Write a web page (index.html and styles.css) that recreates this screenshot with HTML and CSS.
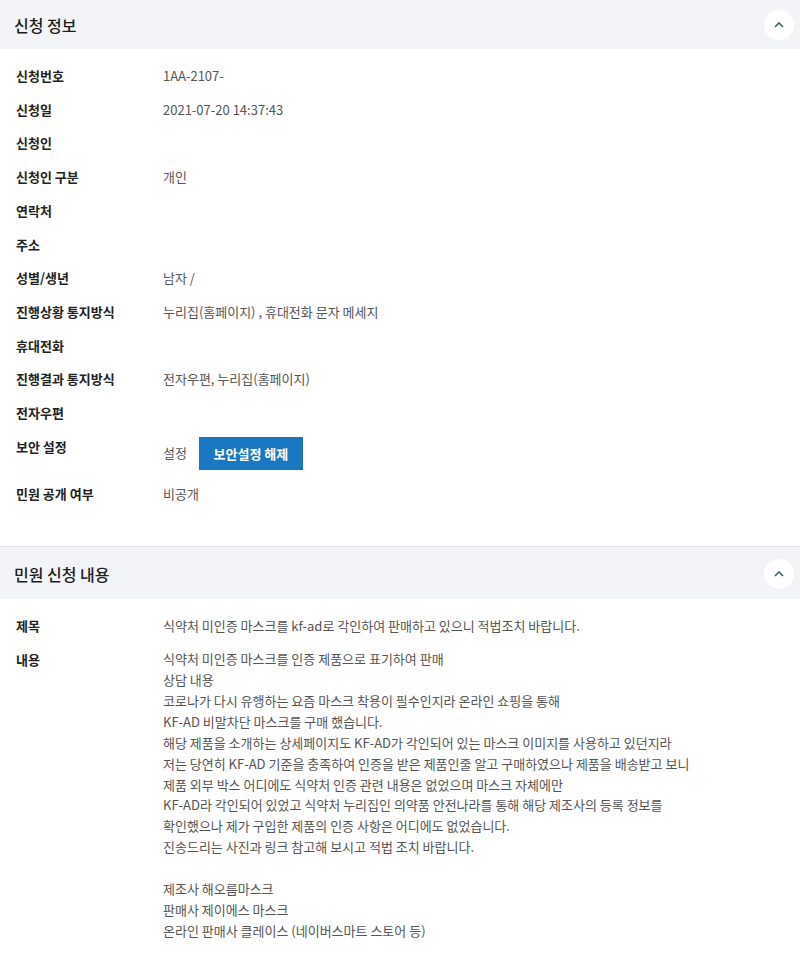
FILE: index.html
```html
<!DOCTYPE html>
<html>
	<head>
		<meta charset="utf-8">
		<title>민원 신청 정보</title>
		<link rel="stylesheet" href="styles.css">
	</head>
	<body>
		<div class="section first">
			<div class="sec-head">
				<h3>신청 정보</h3>
				<a class="fold" href="javascript:;">
					<svg width="14" height="14" viewBox="0 0 14 14"><path d="M3 9 L7 5 L11 9" fill="none" stroke="#3f6468" stroke-width="1.6"/></svg>
				</a>
			</div>
			<dl class="sec-body">
				<div class="row"><dt>신청번호</dt><dd>1AA-2107-</dd></div>
				<div class="row"><dt>신청일</dt><dd>2021-07-20 14:37:43</dd></div>
				<div class="row"><dt>신청인</dt><dd></dd></div>
				<div class="row"><dt>신청인 구분</dt><dd>개인</dd></div>
				<div class="row"><dt>연락처</dt><dd></dd></div>
				<div class="row"><dt>주소</dt><dd></dd></div>
				<div class="row"><dt>성별/생년</dt><dd>남자 /</dd></div>
				<div class="row"><dt>진행상황 통지방식</dt><dd>누리집(홈페이지) , 휴대전화 문자 메세지</dd></div>
				<div class="row"><dt>휴대전화</dt><dd></dd></div>
				<div class="row"><dt>진행결과 통지방식</dt><dd>전자우편, 누리집(홈페이지)</dd></div>
				<div class="row"><dt>전자우편</dt><dd></dd></div>
				<div class="row"><dt>보안 설정</dt><dd class="secure"><span>설정</span><a class="btn" href="javascript:;">보안설정 해제</a></dd></div>
				<div class="row"><dt>민원 공개 여부</dt><dd>비공개</dd></div>
			</dl>
		</div>
		<div class="section">
			<div class="sec-head">
				<h3>민원 신청 내용</h3>
				<a class="fold" href="javascript:;">
					<svg width="14" height="14" viewBox="0 0 14 14"><path d="M3 9 L7 5 L11 9" fill="none" stroke="#3f6468" stroke-width="1.6"/></svg>
				</a>
			</div>
			<dl class="sec-body">
				<div class="row"><dt>제목</dt><dd>식약처 미인증 마스크를 kf-ad로 각인하여 판매하고 있으니 적법조치 바랍니다.</dd></div>
				<div class="row"><dt>내용</dt><dd class="text">식약처 미인증 마스크를 인증 제품으로 표기하여 판매
상담 내용
코로나가 다시 유행하는 요즘 마스크 착용이 필수인지라 온라인 쇼핑을 통해
KF-AD 비말차단 마스크를 구매 했습니다.
해당 제품을 소개하는 상세페이지도 KF-AD가 각인되어 있는 마스크 이미지를 사용하고 있던지라
저는 당연히 KF-AD 기준을 충족하여 인증을 받은 제품인줄 알고 구매하였으나 제품을 배송받고 보니
제품 외부 박스 어디에도 식약처 인증 관련 내용은 없었으며 마스크 자체에만
KF-AD라 각인되어 있었고 식약처 누리집인 의약품 안전나라를 통해 해당 제조사의 등록 정보를
확인했으나 제가 구입한 제품의 인증 사항은 어디에도 없었습니다.
진송드리는 사진과 링크 참고해 보시고 적법 조치 바랍니다.

제조사 해오름마스크
판매사 제이에스 마스크
온라인 판매사 클레이스 (네이버스마트 스토어 등)</dd></div>
			</dl>
		</div>
	</body>
</html>
```

FILE: styles.css
```css
*{
	margin: 0;
	padding: 0;
	box-sizing: border-box;
}
body{
	background-color: #fff;
	font-family: "Noto Sans CJK KR", "Noto Sans", sans-serif;
	font-size: 13px;
	color: #555;
}
.section{
	border-top: 1px solid #dfe1e5;
}
.section.first{
	border-top: none;
}
.sec-head{
	height: 52px;
	background-color: #f3f4f7;
	display: flex;
	align-items: center;
	justify-content: space-between;
	padding: 2px 6px 0 14px;
}
.first .sec-head{
	height: 49px;
	padding-top: 0;
}
.sec-head h3{
	font-size: 16px;
	font-weight: 500;
	color: #1d1d1d;
}
.fold{
	width: 30px;
	height: 30px;
	border-radius: 50%;
	background-color: #fff;
	display: flex;
	align-items: center;
	justify-content: center;
}
.sec-body{
	padding: 10px 0 36px 16px;
}
.row{
	display: flex;
	align-items: flex-start;
	padding: 7px 0;
	line-height: 19.7px;
}
.row dt{
	width: 147px;
	flex: none;
	font-weight: 700;
	color: #222;
}
.row dd{
	color: #555;
}
.secure{
	display: flex;
	align-items: center;
	gap: 12px;
}
.btn{
	display: block;
	width: 104px;
	height: 33px;
	line-height: 33px;
	text-align: center;
	background-color: #1a78c2;
	color: #fff;
	font-weight: 700;
	text-decoration: none;
}
.text{
	white-space: pre-line;
	line-height: 20.9px;
	margin-top: -1px;
}
```
